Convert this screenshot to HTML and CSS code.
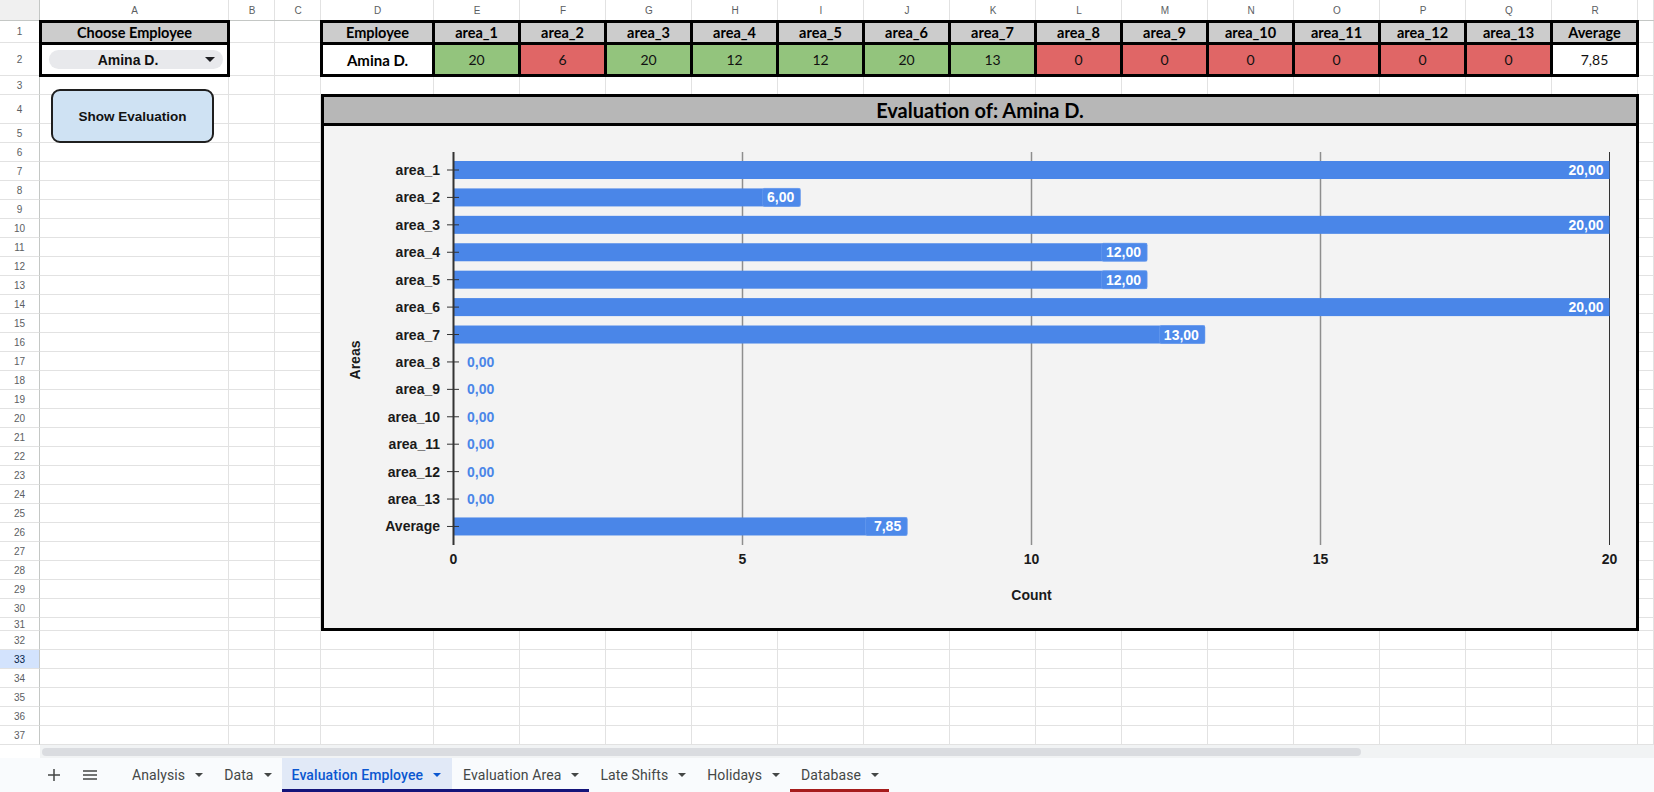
FILE: index.html
```html
<!DOCTYPE html>
<html lang="en">
<head>
<meta charset="utf-8">
<title>Evaluation Employee</title>
<link rel="stylesheet" href="styles.css">
</head>
<body>
<div class="app">
  <div class="sheet">
    <div class="vlines"><i></i><i></i><i></i><i></i><i></i><i></i><i></i><i></i><i></i><i></i><i></i><i></i><i></i><i></i><i></i><i></i><i></i><i></i><i></i><i></i></div>
    <div class="hlines"><i></i><i></i><i></i><i></i><i></i><i></i><i></i><i></i><i></i><i></i><i></i><i></i><i></i><i></i><i></i><i></i><i></i><i></i><i></i><i></i><i></i><i></i><i></i><i></i><i></i><i></i><i></i><i></i><i></i><i></i><i></i><i></i><i></i><i></i><i></i><i></i><i></i><i></i></div>

    <div class="colhead">
      <span class="corner"></span><span>A</span><span>B</span><span>C</span><span>D</span><span>E</span><span>F</span><span>G</span><span>H</span><span>I</span><span>J</span><span>K</span><span>L</span><span>M</span><span>N</span><span>O</span><span>P</span><span>Q</span><span>R</span><span></span>
    </div>

    <div class="rowhead">
      <span>1</span><span>2</span><span>3</span><span>4</span><span>5</span><span>6</span><span>7</span><span>8</span><span>9</span><span>10</span><span>11</span><span>12</span><span>13</span><span>14</span><span>15</span><span>16</span><span>17</span><span>18</span><span>19</span><span>20</span><span>21</span><span>22</span><span>23</span><span>24</span><span>25</span><span>26</span><span>27</span><span>28</span><span>29</span><span>30</span><span>31</span><span>32</span><span class="sel">33</span><span>34</span><span>35</span><span>36</span><span>37</span>
    </div>

    <div class="pick">
      <div class="tc h">Choose Employee</div>
      <div class="tc">
        <div class="chip">
          <span class="chip-text">Amina D.</span>
          <svg class="chip-caret" width="10" height="5" viewBox="0 0 10 5"><path d="M0 0H10L5 5Z" fill="#202124"/></svg>
        </div>
      </div>
    </div>

    <div class="emp-table">
      <div class="tc h">Employee</div>
      <div class="tc h">area_1</div>
      <div class="tc h">area_2</div>
      <div class="tc h">area_3</div>
      <div class="tc h">area_4</div>
      <div class="tc h">area_5</div>
      <div class="tc h">area_6</div>
      <div class="tc h">area_7</div>
      <div class="tc h">area_8</div>
      <div class="tc h">area_9</div>
      <div class="tc h">area_10</div>
      <div class="tc h">area_11</div>
      <div class="tc h">area_12</div>
      <div class="tc h">area_13</div>
      <div class="tc h">Average</div>

      <div class="tc b">Amina D.</div>
      <div class="tc g">20</div>
      <div class="tc r">6</div>
      <div class="tc g">20</div>
      <div class="tc g">12</div>
      <div class="tc g">12</div>
      <div class="tc g">20</div>
      <div class="tc g">13</div>
      <div class="tc r">0</div>
      <div class="tc r">0</div>
      <div class="tc r">0</div>
      <div class="tc r">0</div>
      <div class="tc r">0</div>
      <div class="tc r">0</div>
      <div class="tc">7,85</div>
    </div>

    <div class="chart">
      <div class="chart-title">Evaluation of: Amina D.</div>
      <div class="chart-body">
        <svg class="plot" width="1312" height="502" viewBox="0 0 1312 502">
          <g stroke="#8e8e8e" stroke-width="1.5">
            <line x1="418.5" y1="26" x2="418.5" y2="419"/>
            <line x1="707.5" y1="26" x2="707.5" y2="419"/>
            <line x1="996.5" y1="26" x2="996.5" y2="419"/>
          </g>
          <line x1="1285.5" y1="26" x2="1285.5" y2="419" stroke="#333" stroke-width="1"/>

          <g fill="#4a86e8">
            <rect x="129.5" y="35" width="1156" height="18"/>
            <rect x="129.5" y="62.42" width="346.8" height="18"/>
            <rect x="129.5" y="89.84" width="1156" height="18"/>
            <rect x="129.5" y="117.26" width="693.6" height="18"/>
            <rect x="129.5" y="144.68" width="693.6" height="18"/>
            <rect x="129.5" y="172.1" width="1156" height="18"/>
            <rect x="129.5" y="199.52" width="751.4" height="18"/>
            <rect x="129.5" y="391.46" width="453.7" height="18"/>
          </g>
          <g fill="#4d89ea" stroke="#6a9cee" stroke-width="0.6">
            <rect x="438.5" y="62.42" width="37.8" height="18" rx="2"/>
            <rect x="777.5" y="117.26" width="45.6" height="18" rx="2"/>
            <rect x="777.5" y="144.68" width="45.6" height="18" rx="2"/>
            <rect x="835.5" y="199.52" width="45.4" height="18" rx="2"/>
            <rect x="541.5" y="391.46" width="41.7" height="18" rx="2"/>
          </g>

          <line x1="129.5" y1="26" x2="129.5" y2="419" stroke="#333" stroke-width="2"/>
          <g stroke="#333" stroke-width="1">
            <line x1="123" y1="44" x2="135" y2="44"/>
            <line x1="123" y1="71.42" x2="135" y2="71.42"/>
            <line x1="123" y1="98.84" x2="135" y2="98.84"/>
            <line x1="123" y1="126.26" x2="135" y2="126.26"/>
            <line x1="123" y1="153.68" x2="135" y2="153.68"/>
            <line x1="123" y1="181.1" x2="135" y2="181.1"/>
            <line x1="123" y1="208.52" x2="135" y2="208.52"/>
            <line x1="123" y1="235.94" x2="135" y2="235.94"/>
            <line x1="123" y1="263.36" x2="135" y2="263.36"/>
            <line x1="123" y1="290.78" x2="135" y2="290.78"/>
            <line x1="123" y1="318.2" x2="135" y2="318.2"/>
            <line x1="123" y1="345.62" x2="135" y2="345.62"/>
            <line x1="123" y1="373.04" x2="135" y2="373.04"/>
            <line x1="123" y1="400.46" x2="135" y2="400.46"/>
          </g>

          <g class="cat" text-anchor="end">
            <text x="116" y="49">area_1</text>
            <text x="116" y="76.42">area_2</text>
            <text x="116" y="103.84">area_3</text>
            <text x="116" y="131.26">area_4</text>
            <text x="116" y="158.68">area_5</text>
            <text x="116" y="186.1">area_6</text>
            <text x="116" y="213.52">area_7</text>
            <text x="116" y="240.94">area_8</text>
            <text x="116" y="268.36">area_9</text>
            <text x="116" y="295.78">area_10</text>
            <text x="116" y="323.2">area_11</text>
            <text x="116" y="350.62">area_12</text>
            <text x="116" y="378.04">area_13</text>
            <text x="116" y="405.46">Average</text>
          </g>

          <g class="val" text-anchor="end">
            <text x="1279.5" y="49">20,00</text>
            <text x="470.3" y="76.42">6,00</text>
            <text x="1279.5" y="103.84">20,00</text>
            <text x="817.1" y="131.26">12,00</text>
            <text x="817.1" y="158.68">12,00</text>
            <text x="1279.5" y="186.1">20,00</text>
            <text x="874.9" y="213.52">13,00</text>
            <text x="577.2" y="405.46">7,85</text>
          </g>
          <g class="zero">
            <text x="143" y="240.94">0,00</text>
            <text x="143" y="268.36">0,00</text>
            <text x="143" y="295.78">0,00</text>
            <text x="143" y="323.2">0,00</text>
            <text x="143" y="350.62">0,00</text>
            <text x="143" y="378.04">0,00</text>
          </g>

          <g class="cat" text-anchor="middle">
            <text x="129.5" y="438">0</text>
            <text x="418.5" y="438">5</text>
            <text x="707.5" y="438">10</text>
            <text x="996.5" y="438">15</text>
            <text x="1285.5" y="438">20</text>
            <text x="707.5" y="474">Count</text>
            <text transform="translate(36 234) rotate(-90)">Areas</text>
          </g>
        </svg>
      </div>
    </div>

    <button class="show-btn" type="button">Show Evaluation</button>
  </div>

  <div class="hscroll">
    <div class="track"><div class="thumb"></div></div>
  </div>

  <div class="tabbar">
    <span class="tb-icon plus"><svg width="12" height="12" viewBox="0 0 12 12"><path d="M6 0V12M0 6H12" stroke="#444746" stroke-width="1.5"/></svg></span>
    <span class="tb-icon menu"><svg width="14" height="10" viewBox="0 0 14 10"><path d="M0 1H14M0 5H14M0 9H14" stroke="#444746" stroke-width="1.5"/></svg></span>
    <div class="tabs">
      <div class="tab"><span>Analysis</span><svg class="caret" width="8" height="4" viewBox="0 0 8 4"><path d="M0 0H8L4 4Z"/></svg></div>
      <div class="tab"><span>Data</span><svg class="caret" width="8" height="4" viewBox="0 0 8 4"><path d="M0 0H8L4 4Z"/></svg></div>
      <div class="tab active navy"><span>Evaluation Employee</span><svg class="caret" width="8" height="4" viewBox="0 0 8 4"><path d="M0 0H8L4 4Z"/></svg></div>
      <div class="tab navy"><span>Evaluation Area</span><svg class="caret" width="8" height="4" viewBox="0 0 8 4"><path d="M0 0H8L4 4Z"/></svg></div>
      <div class="tab"><span>Late Shifts</span><svg class="caret" width="8" height="4" viewBox="0 0 8 4"><path d="M0 0H8L4 4Z"/></svg></div>
      <div class="tab"><span>Holidays</span><svg class="caret" width="8" height="4" viewBox="0 0 8 4"><path d="M0 0H8L4 4Z"/></svg></div>
      <div class="tab red"><span>Database</span><svg class="caret" width="8" height="4" viewBox="0 0 8 4"><path d="M0 0H8L4 4Z"/></svg></div>
    </div>
  </div>
</div>
</body>
</html>
```

FILE: styles.css
```css
:root {
  --cols: 40px 189px 46px 46px 113px repeat(14, 86px) 1fr;
  --rows-body: 22px 33px 19px 29px repeat(26, 19px) 13px repeat(6, 19px);
  --grid: #e2e2e2;
  --head-line: #c4c7c5;
}

* { box-sizing: border-box; }

html, body {
  margin: 0;
  padding: 0;
}

body {
  width: 1654px;
  height: 792px;
  overflow: hidden;
  background: #fff;
  font-family: "Liberation Sans", Arial, sans-serif;
  color: #000;
}

.app {
  display: flex;
  flex-direction: column;
  height: 792px;
}

/* ---------- sheet grid ---------- */
.sheet {
  position: relative;
  flex: none;
  height: 745px;
  display: grid;
  grid-template-columns: var(--cols);
  grid-template-rows: 21px var(--rows-body);
}

.vlines {
  grid-column: 1 / -1;
  grid-row: 1 / -1;
  display: grid;
  grid-template-columns: var(--cols);
}
.vlines i { border-right: 1px solid var(--grid); }
.vlines i:first-child { border-right-color: var(--head-line); }

.hlines {
  grid-column: 1 / -1;
  grid-row: 1 / -1;
  display: grid;
  grid-template-rows: 21px var(--rows-body);
}
.hlines i { border-bottom: 1px solid var(--grid); }
.hlines i:first-child { border-bottom-color: var(--head-line); }

.colhead {
  grid-column: 1 / -1;
  grid-row: 1;
  display: grid;
  grid-template-columns: var(--cols);
}
.colhead span {
  display: flex;
  align-items: center;
  justify-content: center;
  font-size: 10px;
  color: #5b5e62;
  padding-bottom: 1px;
}
.colhead .corner {
  background: #f0f0f0;
  border-right: 1px solid var(--head-line);
  border-bottom: 1px solid var(--head-line);
}

.rowhead {
  grid-column: 1;
  grid-row: 2 / -1;
  display: grid;
  grid-template-rows: var(--rows-body);
}
.rowhead span {
  display: flex;
  align-items: center;
  justify-content: center;
  font-size: 10px;
  color: #5b5e62;
  border-bottom: 1px solid var(--grid);
  border-right: 1px solid var(--head-line);
}
.rowhead .sel {
  background: #d3e3fd;
  color: #041e49;
}

/* ---------- bordered cell blocks ---------- */
.pick,
.emp-table {
  margin: -1px;
  display: grid;
  gap: 3px;
  padding: 3px;
  background: #000;
  z-index: 1;
}

.pick {
  grid-column: 2;
  grid-row: 2 / 4;
  grid-template-rows: 22fr 33fr;
}

.emp-table {
  grid-column: 5 / 20;
  grid-row: 2 / 4;
  grid-template-columns: 113fr repeat(14, 86fr);
  grid-template-rows: 22fr 33fr;
}

.tc {
  display: flex;
  align-items: center;
  justify-content: center;
  background: #fff;
  font-family: Lato, "Open Sans", sans-serif;
  font-size: 14px;
  color: #111;
  min-width: 0;
}
.tc.h {
  background: #cccccc;
  font-weight: 700;
  font-size: 14.5px;
  color: #000;
}
.tc.b {
  font-weight: 700;
  font-size: 15px;
  color: #000;
}
.tc.g { background: #93c47d; }
.tc.r { background: #e06666; }

.chip {
  flex: 1;
  margin: 0 4px 0 7px;
  height: 19px;
  border-radius: 10px;
  background: #e8e9ec;
  display: flex;
  align-items: center;
  padding: 0 8px 0 8px;
  font-family: "Liberation Sans", Arial, sans-serif;
  font-weight: 700;
  font-size: 14px;
  color: #111;
}
.chip-text {
  flex: 1;
  text-align: center;
}
.chip-caret {
  flex: none;
  margin-left: 6px;
}

/* ---------- chart ---------- */
.chart {
  grid-column: 5 / 20;
  grid-row: 5 / 33;
  margin: -1px -1px 0 0;
  border: 3px solid #000;
  background: #f3f3f3;
  display: flex;
  flex-direction: column;
  z-index: 2;
  overflow: hidden;
}

.chart-title {
  flex: none;
  height: 29px;
  background: #b7b7b7;
  border-bottom: 3px solid #000;
  display: flex;
  align-items: center;
  justify-content: center;
  font-family: Lato, "Open Sans", sans-serif;
  font-weight: 700;
  font-size: 20px;
  color: #000;
}

.chart-body {
  flex: 1;
  overflow: hidden;
}

.plot {
  display: block;
}
.plot text {
  font-family: "Liberation Sans", Arial, sans-serif;
  font-weight: 700;
  font-size: 14px;
}
.plot .cat text { fill: #1a1a1a; }
.plot .val text { fill: #fff; }
.plot .zero text { fill: #4a86e8; }

/* ---------- button drawing ---------- */
.show-btn {
  position: absolute;
  left: 51px;
  top: 89px;
  width: 163px;
  height: 54px;
  margin: 0;
  padding: 0;
  background: #cfe2f3;
  border: 2px solid #1f1f1f;
  border-radius: 9px;
  font-family: "Liberation Sans", Arial, sans-serif;
  font-weight: 700;
  font-size: 13.5px;
  color: #111;
  z-index: 3;
}

/* ---------- horizontal scroll ---------- */
.hscroll {
  flex: none;
  height: 13px;
  display: flex;
  background: #fff;
}
.track {
  flex: 1;
  margin-left: 40px;
  background: #f1f3f4;
  padding: 3px 0 0 2px;
}
.thumb {
  width: 1319px;
  height: 8px;
  border-radius: 4px;
  background: #dadce0;
}

/* ---------- sheet tabs ---------- */
.tabbar {
  flex: none;
  height: 34px;
  background: #f9fbfd;
  display: flex;
  align-items: stretch;
  padding-left: 40px;
  font-family: Roboto, "Liberation Sans", sans-serif;
}

.tb-icon {
  width: 28px;
  display: flex;
  align-items: center;
  justify-content: center;
}
.tb-icon.menu { margin-left: 8px; }

.tabs {
  display: flex;
  align-items: stretch;
  margin-left: 17px;
}

.tab {
  display: flex;
  align-items: center;
  gap: 10px;
  padding: 3px 10px 0 11px;
  font-size: 14px;
  font-weight: 400;
  letter-spacing: 0.1px;
  color: #444746;
  border-bottom: 3px solid transparent;
}
.tab .caret { fill: #444746; flex: none; }

.tab.active {
  background: #e1e9f7;
  color: #0b57d0;
  font-weight: 500;
  letter-spacing: 0.1px;
  padding-left: 10px;
  padding-right: 11px;
}
.tab.active .caret { fill: #0b57d0; }

.tab.navy { border-bottom-color: #14147a; }
.tab.red { border-bottom-color: #a61c1c; }
```
